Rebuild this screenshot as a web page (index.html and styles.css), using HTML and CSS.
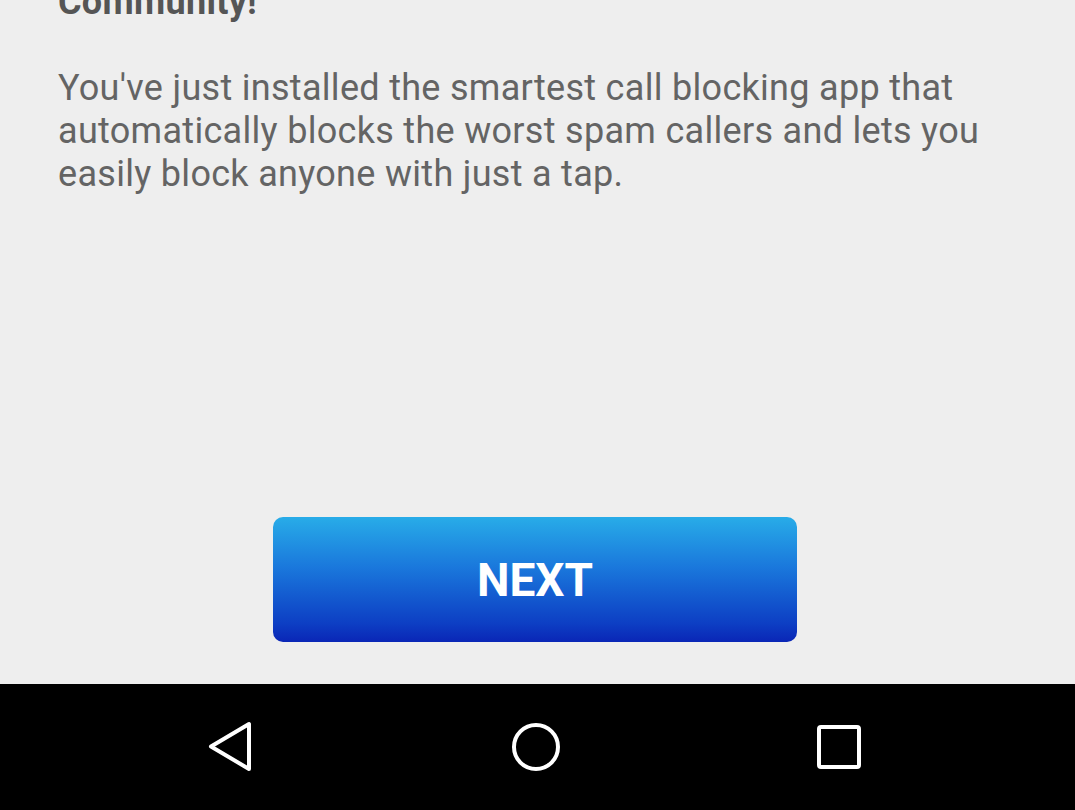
FILE: index.html
```html
<!DOCTYPE html>
<html>
<head>
<meta charset="utf-8">
<link rel="stylesheet" href="styles.css">
</head>
<body>
<div class="screen">
  <div class="content">
    <h1 class="title">Community!</h1>
    <p class="desc">You've just installed the smartest call blocking app that automatically blocks the worst spam callers and lets you easily block anyone with just a tap.</p>
  </div>
  <div class="actions">
    <button class="next">NEXT</button>
  </div>
  <nav class="navbar">
    <svg class="nav-icon" width="48" height="52" viewBox="0 0 48 52"><path d="M41 3 L41 48 L3 25.5 Z" fill="none" stroke="#fff" stroke-width="4" stroke-linejoin="round"/></svg>
    <svg class="nav-icon" width="52" height="52" viewBox="0 0 52 52"><circle cx="26" cy="26" r="22" fill="none" stroke="#fff" stroke-width="4"/></svg>
    <svg class="nav-icon" width="46" height="46" viewBox="0 0 46 46"><rect x="3" y="3" width="40" height="40" rx="2" fill="none" stroke="#fff" stroke-width="4"/></svg>
  </nav>
</div>
</body>
</html>
```

FILE: styles.css
```css
html, body {
  margin: 0;
  padding: 0;
  background: #eeeeee;
}
.screen {
  width: 1075px;
  height: 810px;
  display: flex;
  flex-direction: column;
  overflow: hidden;
  font-family: Roboto, "Noto Sans", sans-serif;
}
.content {
  flex: 1;
  padding: 0 40px 0 58px;
}
.title {
  margin: -19px 0 0 0;
  font-size: 36px;
  line-height: 43px;
  font-weight: 700;
  letter-spacing: 0.3px;
  color: #555555;
}
.desc {
  margin: 43px 0 0 0;
  font-size: 36px;
  line-height: 43px;
  letter-spacing: 0.3px;
  color: #646464;
}
.actions {
  display: flex;
  justify-content: center;
  padding-bottom: 42px;
}
.next {
  width: 524px;
  height: 125px;
  margin-right: 5px;
  border: none;
  border-radius: 10px;
  background: linear-gradient(to bottom, #28ace8 0%, #1a78dc 40%, #0d3fc4 85%, #0a26b6 100%);
  color: #ffffff;
  font-family: Roboto, "Noto Sans", sans-serif;
  font-weight: 700;
  font-size: 46px;
  padding: 0;
}
.navbar {
  height: 126px;
  background: #000000;
  display: flex;
  align-items: center;
  justify-content: space-between;
  padding: 0 213px 0 208px;
}
.nav-icon {
  display: block;
}
```
